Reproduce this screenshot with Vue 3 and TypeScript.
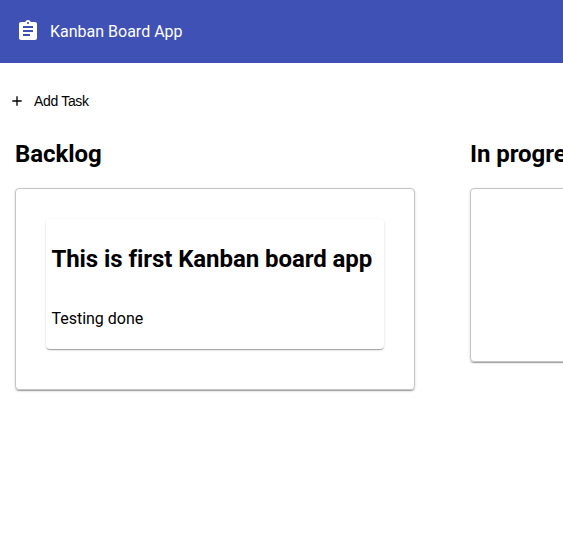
<script setup lang="ts">
interface Task {
  title: string
  description: string
}
interface Column {
  name: string
  tasks: Task[]
}
const columns: Column[] = [
  { name: 'Backlog', tasks: [{ title: 'This is first Kanban board app', description: 'Testing done' }] },
  { name: 'In progress', tasks: [] },
]
</script>

<template>
  <div class="app">
    <header class="toolbar">
      <svg class="logo" viewBox="0 0 24 24" aria-hidden="true">
        <path d="M19 3h-4.18C14.4 1.84 13.3 1 12 1c-1.3 0-2.4.84-2.82 2H5c-1.1 0-2 .9-2 2v14c0 1.1.9 2 2 2h14c1.1 0 2-.9 2-2V5c0-1.1-.9-2-2-2zm-7 0c.55 0 1 .45 1 1s-.45 1-1 1-1-.45-1-1 .45-1 1-1zm2 14H7v-2h7v2zm3-4H7v-2h10v2zm0-4H7V7h10v2z" />
      </svg>
      <span>Kanban Board App</span>
    </header>
    <button class="add" type="button">
      <svg viewBox="0 0 24 24" aria-hidden="true"><path d="M19 13h-6v6h-2v-6H5v-2h6V5h2v6h6v2z" /></svg>
      <span>Add Task</span>
    </button>
    <main class="board">
      <section v-for="column in columns" :key="column.name" class="column">
        <h2>{{ column.name }}</h2>
        <div class="list">
          <article v-for="task in column.tasks" :key="task.title" class="task">
            <h2>{{ task.title }}</h2>
            <p>{{ task.description }}</p>
          </article>
        </div>
      </section>
    </main>
  </div>
</template>

<style>
body {
  margin: 0;
  overflow: hidden;
  background: #fff;
}
</style>

<style scoped>
.app {
  overflow: hidden;
  font-family: Roboto, sans-serif;
  font-size: 16px;
  color: #000;
}
.toolbar {
  display: flex;
  align-items: center;
  gap: 10px;
  height: 63px;
  padding: 0 16px;
  box-sizing: border-box;
  background: #3f51b5;
  color: #fff;
}
.logo {
  width: 24px;
  height: 24px;
  margin-bottom: 2px;
  fill: currentColor;
}
.add {
  display: flex;
  align-items: center;
  gap: 9px;
  height: 36px;
  margin: 20px 0 0 9px;
  padding: 0;
  border: 0;
  background: none;
  color: #000;
  font: 14px "Liberation Sans", Arial, sans-serif;
  letter-spacing: -0.33px;
}
.add svg {
  width: 16px;
  height: 16px;
}
.board {
  display: flex;
  gap: 55px;
  padding: 20px 15px;
}
.column {
  flex: 0 0 400px;
}
h2 {
  margin: 0;
  font-size: 24px;
  line-height: 30px;
  font-weight: 700;
  letter-spacing: -0.07px;
  white-space: nowrap;
}
.list {
  box-sizing: border-box;
  min-height: 174px;
  margin-top: 19px;
  padding: 30px;
  border: 1px solid #c4c4c4;
  border-radius: 4px;
  box-shadow: 0 2px 1px -1px rgba(0, 0, 0, 0.2), 0 1px 1px rgba(0, 0, 0, 0.14), 0 1px 3px rgba(0, 0, 0, 0.12);
}
.task {
  box-sizing: border-box;
  height: 130px;
  margin-bottom: 10px;
  padding: 25px 5.4px;
  border-radius: 4px;
  box-shadow: 0 2px 1px -1px rgba(0, 0, 0, 0.2), 0 1px 1px rgba(0, 0, 0, 0.14), 0 1px 3px rgba(0, 0, 0, 0.12);
}
.task p {
  margin: 33px 0 0;
  line-height: 24px;
}
</style>
